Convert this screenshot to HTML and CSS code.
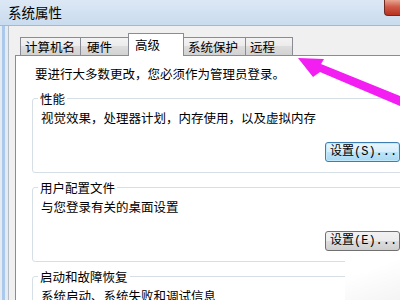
FILE: index.html
```html
<!DOCTYPE html>
<html lang="zh-CN">
<head>
	<meta charset="UTF-8">
	<title>系统属性</title>
	<link rel="stylesheet" href="styles.css">
</head>
<body>
	<div class="screen">
		<div class="titlebar">
			<span class="title">系统属性</span>
			<span class="close"></span>
		</div>
		<div class="window">
			<div class="frame"></div>
			<div class="dialog">
				<ul class="tabs">
					<li class="tab t1">计算机名</li>
					<li class="tab t2">硬件</li>
					<li class="tab t3 current">高级</li>
					<li class="tab t4">系统保护</li>
					<li class="tab t5">远程</li>
				</ul>
				<div class="panel">
					<p class="intro">要进行大多数更改，您必须作为管理员登录。</p>
					<fieldset class="group">
						<legend>性能</legend>
						<p>视觉效果，处理器计划，内存使用，以及虚拟内存</p>
						<div class="row"><button class="btn focus">设置<span>(S)...</span></button></div>
					</fieldset>
					<fieldset class="group">
						<legend>用户配置文件</legend>
						<p>与您登录有关的桌面设置</p>
						<div class="row"><button class="btn">设置<span>(E)...</span></button></div>
					</fieldset>
					<fieldset class="group">
						<legend>启动和故障恢复</legend>
						<p>系统启动、系统失败和调试信息</p>
					</fieldset>
				</div>
			</div>
		</div>
		<!-- 右下角水印遮挡 -->
		<div class="fade"></div>
		<!-- 指向“远程”的箭头 -->
		<svg class="arrow" width="400" height="300" viewBox="0 0 400 300">
			<polygon points="298,58 324,59 321,64 400,96 400,106 320,72 313,77" fill="#f21ef2"/>
		</svg>
	</div>
</body>
</html>
```

FILE: styles.css
```css
*{
	margin: 0;
	padding: 0;
	box-sizing: border-box;
}
li{
	list-style: none;
}
body{
	font-family: "Noto Sans CJK SC", "Liberation Sans", sans-serif;
	font-size: 12.5px;
	color: #000;
}
.screen{
	width: 400px;
	height: 300px;
	overflow: hidden;
	position: relative;
	background: #f0f0f0;
}
.titlebar{
	height: 26px;
	display: flex;
	align-items: flex-start;
	background: linear-gradient(#dce8f5, #c9dbee);
	border-bottom: 1px solid #a9b8c9;
}
.title{
	font-size: 13.5px;
	line-height: 18px;
	margin: 3px 0 0 8px;
}
.close{
	margin-left: auto;
	width: 16px;
	height: 16px;
	border-left: 1px solid #6f2a22;
	border-bottom: 1px solid #6f2a22;
	border-bottom-left-radius: 4px;
	background: linear-gradient(#e8a590, #cf5b48 45%, #b8321f);
}
.window{
	display: flex;
	height: 274px;
}
.frame{
	flex: none;
	width: 9px;
	border-right: 1px solid #b4bcc6;
	background: linear-gradient(to right, #e4ebf2 2px, #abc9ea 2px, #abc9ea 5px, #e4ebf2 5px);
}
.dialog{
	flex: 1;
	min-width: 0;
	padding: 7px 0 0 6px;
}
.tabs{
	display: flex;
	align-items: flex-end;
	height: 22px;
	padding-left: 5px;
}
.tab{
	flex: none;
	height: 18px;
	line-height: 16px;
	padding: 1px 0 0 4px;
	border: 1px solid #898c95;
	border-bottom: none;
	margin-left: -1px;
	background: linear-gradient(#f3f3f3, #ebebeb 50%, #dddddd 50%, #d2d2d2);
	white-space: nowrap;
}
.t1{ width: 61px; margin-left: 0; }
.t2{ width: 49px; padding-left: 6px; }
.t3{ width: 56px; }
.t4{ width: 63px; }
.t5{ width: 48px; }
.tab.current{
	height: 23px;
	margin-bottom: -1px;
	line-height: 17px;
	padding: 2px 0 0 6px;
	background: #fff;
	position: relative;
	z-index: 1;
}
.panel{
	width: 420px;
	height: 260px;
	background: #fff;
	border: 1px solid #898c95;
	padding: 9px 0 0 16px;
}
.intro{
	line-height: 17px;
	margin-left: 3px;
}
.group{
	width: 377px;
	border: 1px solid #d5dfe5;
	border-radius: 3px;
	padding: 2px 8px 10px 8px;
	margin-top: 6px;
}
.intro + .group{
	margin-top: 8px;
}
.group legend{
	line-height: 17px;
	padding: 0 2px;
	margin-left: -3px;
}
.group p{
	line-height: 17px;
}
.row{
	display: flex;
	justify-content: flex-end;
	margin-top: 16px;
}
.btn{
	width: 75px;
	height: 20px;
	padding-left: 4px;
	text-align: left;
	font-family: "Liberation Mono", "Noto Sans CJK SC", monospace;
	font-size: 12px;
	line-height: 18px;
	color: #000;
	border: 1px solid #707070;
	border-radius: 3px;
	background: linear-gradient(#f2f2f2, #ebebeb 50%, #dddddd 50%, #cfcfcf);
}
.btn.focus{
	border-color: #3c7fb1;
	background: linear-gradient(#e8f6fd, #d6eefb 50%, #bfe4f8 50%, #a9d9f2);
	box-shadow: inset 0 0 0 1px #c2e8fb;
}
.fade{
	position: absolute;
	left: 345px;
	top: 256px;
	width: 60px;
	height: 50px;
	background: linear-gradient(160deg, #fff 30%, #f2f2f2);
}
.arrow{
	position: absolute;
	left: 0;
	top: 0;
	pointer-events: none;
}
```
